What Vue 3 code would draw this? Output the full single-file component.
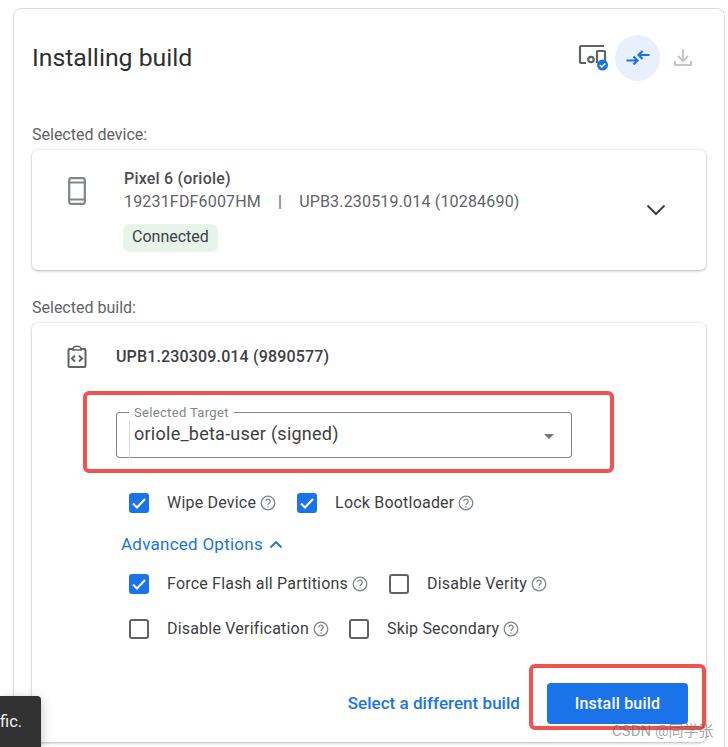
<script setup>
const row1 = [
  { label: 'Wipe Device', on: true },
  { label: 'Lock Bootloader', on: true }
]
const row2 = [
  { label: 'Force Flash all Partitions', on: true },
  { label: 'Disable Verity', on: false }
]
const row3 = [
  { label: 'Disable Verification', on: false },
  { label: 'Skip Secondary', on: false }
]
const rows = [
  { items: row1, cls: 'r1' },
  { items: row2, cls: 'r2' },
  { items: row3, cls: 'r3' }
]
</script>

<template>
  <div class="page">
    <section class="panel">
      <header class="head">
        <h1>Installing build</h1>
        <div class="tools">
          <span class="tool dev">
            <svg width="32" height="30" viewBox="0 0 32 30" fill="none">
              <path d="M8 20H3a1 1 0 0 1-1-1V4a1 1 0 0 1 1-1h23" stroke="#5f6368" stroke-width="2.200"/>
              <path d="M19 20V9a1 1 0 0 1 1-1h6a1 1 0 0 1 1 1v9" stroke="#5f6368" stroke-width="2.200"/>
              <circle cx="13" cy="16.500" r="2.700" stroke="#5f6368" stroke-width="2.200"/>
              <circle cx="24.500" cy="22" r="5.500" fill="#1a73e8"/>
              <path d="M21.800 22l2 2 3.500-3.600" stroke="#fff" stroke-width="1.500"/>
            </svg>
          </span>
          <span class="tool active">
            <svg width="26" height="24" viewBox="0 0 26 24" fill="none" stroke="#1a73e8" stroke-width="2.200">
              <path d="M1.500 14.500H11.500M8.500 10.500l4 4-4 4"/>
              <path d="M24.500 9H14.500M17.500 5l-4 4 4 4"/>
            </svg>
          </span>
          <span class="tool dl">
            <svg width="20" height="20" viewBox="0 0 20 20" fill="none" stroke="#c4c7c9" stroke-width="2">
              <path d="M10 1v11M5 8l5 5 5-5"/>
              <path d="M2 13v4h16v-4"/>
            </svg>
          </span>
        </div>
      </header>

      <p class="caption first">Selected device:</p>
      <div class="card device">
        <svg class="phone" width="18" height="28" viewBox="0 0 18 28" fill="none">
          <rect x="1.200" y="1.200" width="15.600" height="25.600" rx="2" stroke="#80868b" stroke-width="2.200"/>
          <path d="M1 5.500h16M1 22.500h16" stroke="#80868b" stroke-width="2"/>
        </svg>
        <div class="dev-info">
          <div class="dev-name">Pixel 6 (oriole)</div>
          <div class="dev-meta"><span>19231FDF6007HM</span><span class="sep">|</span><span>UPB3.230519.014 (10284690)</span></div>
          <span class="chip">Connected</span>
        </div>
        <svg class="chev" width="20" height="12" viewBox="0 0 20 12" fill="none" stroke="#3c4043" stroke-width="2">
          <path d="M1.500 1.500L10 10l8.500-8.500"/>
        </svg>
      </div>

      <p class="caption second">Selected build:</p>
      <div class="card build">
        <div class="build-head">
          <svg width="20" height="24" viewBox="0 0 20 24" fill="none" stroke="#5f6368" stroke-width="2">
            <path d="M6 4H2.500a1 1 0 0 0-1 1v16a1 1 0 0 0 1 1h15a1 1 0 0 0 1-1V5a1 1 0 0 0-1-1H14"/>
            <path d="M6 5V4a4 2.800 0 0 1 8 0v1z" stroke-width="1.500"/>
            <path d="M8 10.500L5 13.500l3 3M12 10.500l3 3-3 3"/>
          </svg>
          <span class="build-name">UPB1.230309.014 (9890577)</span>
        </div>

        <div class="select">
          <span class="legend-gap"><span class="legend">Selected Target</span></span>
          <span class="value">oriole_beta-user (signed)</span>
          <span class="arrow"></span>
        </div>

        <div class="options">
          <template v-for="(row, idx) in rows" :key="row.cls">
            <div class="opt-row" :class="row.cls">
              <label v-for="item in row.items" :key="item.label" class="opt">
                <span class="box" :class="{ on: item.on }">
                  <svg v-if="item.on" width="20" height="20" viewBox="0 0 20 20" fill="none" stroke="#fff" stroke-width="2">
                    <path d="M4 10.500l4 4 8-8.500"/>
                  </svg>
                </span>
                <span class="opt-text">{{ item.label }}</span>
                <svg class="help" width="16" height="16" viewBox="0 0 16 16" fill="none" stroke="#80868b" stroke-width="1.300">
                  <circle cx="8" cy="8" r="6.800"/>
                  <path d="M5.800 6.300a2.200 2.200 0 1 1 3.500 1.800c-.8.600-1.300 1-1.300 2"/>
                  <path d="M8 11.200v1.300"/>
                </svg>
              </label>
            </div>
            <div v-if="idx === 0" class="advanced">
              Advanced Options
              <svg width="14" height="9" viewBox="0 0 14 9" fill="none" stroke="#1a73e8" stroke-width="1.800">
                <path d="M1.500 7.500L7 2l5.500 5.500"/>
              </svg>
            </div>
          </template>
        </div>

        <div class="actions">
          <a class="link">Select a different build</a>
          <button class="primary" type="button">Install build</button>
        </div>
      </div>
    </section>

    <div class="mark mark-a"></div>
    <div class="mark mark-b"></div>
    <div class="toast">fic.</div>
    <div class="watermark">CSDN @同学张</div>
  </div>
</template>

<style>
html, body { margin: 0; background: #fff; overflow: hidden; }
</style>

<style scoped>
.page {
  position: relative;
  width: 728px;
  height: 747px;
  overflow: hidden;
  box-sizing: border-box;
  padding: 8px 3px 0 13px;
  font-family: Roboto, "Noto Sans CJK SC", sans-serif;
  color: #3c4043;
}
.panel {
  box-sizing: border-box;
  height: 780px;
  border: 1px solid #dadce0;
  border-radius: 8px;
  padding: 0 18px;
}
.head {
  display: flex;
  justify-content: space-between;
  align-items: flex-start;
  height: 100px;
}
h1 {
  margin: 32px 0 0;
  font: 400 24.800px/34px Roboto, sans-serif;
  color: #2d2f31;
}
.tools {
  display: flex;
  align-items: center;
  margin: 26px 0 0 0;
}
.tool { display: flex; align-items: center; justify-content: center; }
.dev { width: 32px; height: 46px; margin-right: 5px; margin-left: -1px; }
.active {
  width: 45px;
  height: 46px;
  border-radius: 50%;
  background: #e8f0fe;
}
.dl { width: 46px; height: 46px; }
.caption {
  margin: 0;
  font-size: 16px;
  line-height: 20px;
  color: #5f6368;
}
.first { padding-top: 16px; height: 41px; box-sizing: border-box; }
.second { height: 53px; padding-top: 28px; box-sizing: border-box; }
.card {
  background: #fff;
  border-radius: 6px;
  box-shadow: 0 1px 3px rgba(60, 64, 67, .35), 0 0 2px rgba(60, 64, 67, .12);
}
.device {
  display: flex;
  align-items: flex-start;
  height: 120px;
  box-sizing: border-box;
  padding: 27px 40px 0 36px;
}
.phone { flex: none; }
.dev-info { margin-left: 38px; flex: 1; margin-top: -8px; }
.dev-name {
  font-size: 16px;
  font-weight: 500;
  line-height: 20px;
  letter-spacing: .2px;
  color: #4a4d51;
}
.dev-meta {
  display: flex;
  margin-top: 1px;
  font-size: 16px;
  line-height: 24px;
  letter-spacing: .18px;
  color: #5f6368;
  white-space: nowrap;
}
.sep { margin: 0 17px 0 17px; }
.chip {
  display: inline-block;
  margin: 10px 0 0 -1px;
  padding: 0 9px;
  height: 28px;
  line-height: 26px;
  border-radius: 7px;
  background: #e6f4ea;
  font-size: 16px;
  color: #3c4043;
}
.chev { flex: none; margin-top: 27px; }
.build { height: 419px; position: relative; }
.build-head {
  display: flex;
  align-items: center;
  height: 24px;
  padding: 22px 0 0 35px;
}
.build-name {
  margin: -2px 0 0 29px;
  font-size: 16px;
  font-weight: 500;
  letter-spacing: .15px;
  color: #3c4043;
}
.select {
  position: relative;
  display: flex;
  align-items: center;
  box-sizing: border-box;
  width: 456px;
  height: 46px;
  margin: 43px 0 0 84px;
  border: 1px solid #80868b;
  border-top-color: transparent;
  border-radius: 4px;
  padding: 0 17px;
}
.legend-gap {
  position: absolute;
  left: -1px;
  right: -1px;
  top: -1px;
  height: 4px;
  border-top: 1px solid #80868b;
  border-radius: 4px 4px 0 0;
}
.legend {
  position: absolute;
  left: 13px;
  top: -8px;
  padding: 0 5px;
  background: #fff;
  font-size: 13px;
  line-height: 15px;
  letter-spacing: .33px;
  color: #80868b;
}
.select::before {
  content: "";
  position: absolute;
  left: 12px;
  top: -1px;
  bottom: -1px;
  width: 1px;
  background: #dadce0;
}
.value {
  margin-top: -2px;
  font-size: 18px;
  line-height: 24px;
  letter-spacing: .25px;
  color: #3c4043;
}
.arrow {
  position: absolute;
  right: 17px;
  top: 21px;
  border: 5.500px solid transparent;
  border-top: 5.500px solid #757575;
  border-bottom: 0;
}
.options { margin-left: 97px; }
.opt-row { display: flex; height: 20px; align-items: center; }
.r1 { margin-top: 35px; }
.r2 { margin-top: 18px; }
.r3 { margin-top: 25px; }
.opt { display: flex; align-items: center; margin-right: 21px; }
.r3 .opt { margin-right: 20px; }
.box {
  flex: none;
  box-sizing: border-box;
  width: 20px;
  height: 20px;
  border: 2px solid #5f6368;
  border-radius: 3px;
  margin-right: 18px;
  display: flex;
  align-items: center;
  justify-content: center;
}
.box.on { background: #1a73e8; border: 0; }
.opt-text {
  font-size: 16px;
  line-height: 20px;
  letter-spacing: .2px;
  color: #3c4043;
  white-space: nowrap;
}
.help { margin-left: 4px; flex: none; }
.advanced {
  display: flex;
  align-items: center;
  gap: 6px;
  margin: 19px 0 0 -8px;
  font-size: 17px;
  line-height: 24px;
  letter-spacing: .25px;
  color: #1a73e8;
}
.actions {
  position: absolute;
  right: 18px;
  bottom: 18px;
  display: flex;
  align-items: center;
  gap: 27px;
}
.link {
  margin-top: -2px;
  font-size: 17px;
  font-weight: 500;
  letter-spacing: .04px;
  color: #1a73e8;
}
.primary {
  width: 141px;
  height: 41px;
  border: 0;
  border-radius: 4px;
  background: #1a73e8;
  color: #fff;
  font: 500 16px Roboto, sans-serif;
  letter-spacing: .2px;
}
.mark {
  position: absolute;
  box-sizing: border-box;
  border: 4px solid #ef5350;
  border-radius: 6px;
  pointer-events: none;
}
.mark-a { left: 83px; top: 391px; width: 531px; height: 82px; }
.mark-b { left: 529px; top: 664px; width: 177px; height: 66px; }
.toast {
  position: absolute;
  left: 0;
  top: 696px;
  width: 41px;
  height: 51px;
  box-sizing: border-box;
  padding-top: 16px;
  background: #323232;
  border-radius: 0 4px 0 0;
  color: #f1f1f1;
  font-size: 16.500px;
  line-height: 20px;
  box-shadow: 0 3px 12px rgba(0, 0, 0, .25);
}
.watermark {
  position: absolute;
  left: 612px;
  top: 723px;
  font-size: 15px;
  line-height: 16px;
  color: rgba(90, 90, 90, .55);
  white-space: nowrap;
}
</style>
